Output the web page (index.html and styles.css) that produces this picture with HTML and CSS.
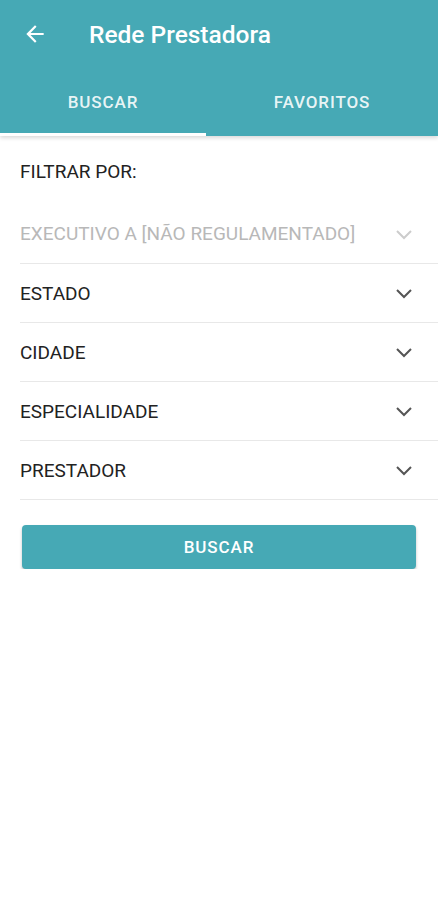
FILE: index.html
```html
<!DOCTYPE html>
<html lang="pt">

<head>
  <meta charset="UTF-8">
  <title>Rede Prestadora</title>
  <link rel="stylesheet" href="styles.css">
</head>

<body>
  <div class="header">
    <div class="toolbar">
      <svg class="back" width="24" height="24" viewBox="0 0 24 24">
        <path d="M20 11H7.83l5.59-5.59L12 4l-8 8 8 8 1.41-1.41L7.83 13H20v-2z" fill="#fff"/>
      </svg>
      <h1>Rede Prestadora</h1>
    </div>
    <div class="tabs">
      <div class="tab active">BUSCAR</div>
      <div class="tab">FAVORITOS</div>
    </div>
  </div>

  <div class="content">
    <p class="filter-title">FILTRAR POR:</p>

    <div class="select disabled">
      <span>EXECUTIVO A [NÃO REGULAMENTADO]</span>
      <svg class="chevron" width="24" height="24" viewBox="0 0 24 24"><path d="M5 9l7 7 7-7" /></svg>
    </div>
    <div class="select">
      <span>ESTADO</span>
      <svg class="chevron" width="24" height="24" viewBox="0 0 24 24"><path d="M5 9l7 7 7-7" /></svg>
    </div>
    <div class="select">
      <span>CIDADE</span>
      <svg class="chevron" width="24" height="24" viewBox="0 0 24 24"><path d="M5 9l7 7 7-7" /></svg>
    </div>
    <div class="select">
      <span>ESPECIALIDADE</span>
      <svg class="chevron" width="24" height="24" viewBox="0 0 24 24"><path d="M5 9l7 7 7-7" /></svg>
    </div>
    <div class="select">
      <span>PRESTADOR</span>
      <svg class="chevron" width="24" height="24" viewBox="0 0 24 24"><path d="M5 9l7 7 7-7" /></svg>
    </div>

    <button class="btn-primary">BUSCAR</button>
  </div>
</body>

</html>
```

FILE: styles.css
```css
body {
  font-family: Roboto, 'Noto Sans', sans-serif;
  background: #fff;
  color: #222;
  margin: 0;
  padding: 0;
}

.header {
  background: #46a9b5;
  color: #fff;
  box-shadow: 0 2px 4px rgba(0, 0, 0, 0.15);
}

.toolbar {
  height: 68px;
  display: flex;
  align-items: center;
  padding-left: 22px;
}

.back {
  width: 26px;
  height: 26px;
}

.toolbar h1 {
  margin: 0 0 0 41px;
  font-size: 24.5px;
  font-weight: 500;
}

.tabs {
  display: flex;
  height: 68px;
}

.tab {
  flex: 1;
  display: flex;
  align-items: center;
  justify-content: center;
  font-size: 17px;
  font-weight: 500;
  letter-spacing: 0.9px;
  color: rgba(255, 255, 255, 0.9);
  border-bottom: 3px solid transparent;
  padding-top: 2px;
}

.tab.active {
  flex: 0 0 206px;
  border-bottom-color: #fff;
}

.content {
  padding-left: 20px;
}

.filter-title {
  margin: 0;
  height: 66px;
  display: flex;
  align-items: center;
  font-size: 19px;
  padding-top: 2px;
}

.select {
  height: 58px;
  border-bottom: 1px solid #e8e8e8;
  display: flex;
  align-items: center;
  justify-content: space-between;
  padding-right: 22px;
  font-size: 19px;
  color: #222;
}

.select.disabled {
  color: #b8b8b8;
  height: 59px;
}

.chevron path {
  fill: none;
  stroke: #555;
  stroke-width: 2;
}

.select.disabled .chevron path {
  stroke: #ccc;
}

button.btn-primary {
  display: block;
  margin: 25px 0 0 2px;
  width: 394px;
  height: 44px;
  background: #46a9b5;
  color: #fff;
  border: none;
  border-radius: 4px;
  font-family: Roboto, sans-serif;
  font-size: 17px;
  font-weight: 500;
  letter-spacing: 0.9px;
  box-shadow: 0 2px 3px rgba(0, 0, 0, 0.25);
  cursor: pointer;
}
```
